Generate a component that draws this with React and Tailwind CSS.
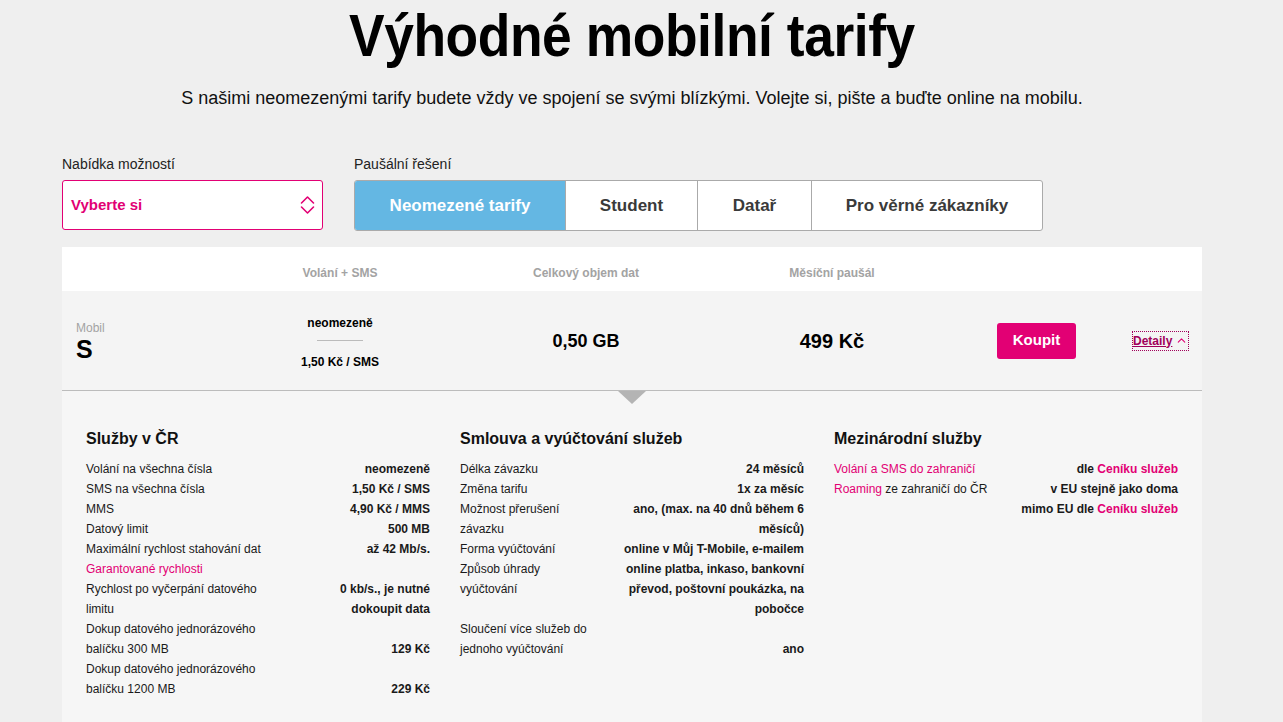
import { ChevronUp } from 'lucide-react';

const TABS = [
  { label: 'Neomezené tarify', w: 'w-[210px]', active: true },
  { label: 'Student', w: 'w-[132px]' },
  { label: 'Datař', w: 'w-[114px]' },
  { label: 'Pro věrné zákazníky', w: 'w-[231px]' },
];

const PINK = 'text-[#e20074]';

const SLUZBY = [
  ['Volání na všechna čísla', 'neomezeně'],
  ['SMS na všechna čísla', '1,50 Kč / SMS'],
  ['MMS', '4,90 Kč / MMS'],
  ['Datový limit', '500 MB'],
  ['Maximální rychlost stahování dat', 'až 42 Mb/s.'],
  [<span className={PINK}>Garantované rychlosti</span>, ''],
  ['Rychlost po vyčerpání datového limitu', '0 kb/s., je nutné dokoupit data'],
  ['Dokup datového jednorázového balíčku 300 MB', '129 Kč'],
  ['Dokup datového jednorázového balíčku 1200 MB', '229 Kč'],
];

const SMLOUVA = [
  ['Délka závazku', '24 měsíců'],
  ['Změna tarifu', '1x za měsíc'],
  ['Možnost přerušení závazku', 'ano, (max. na 40 dnů během 6 měsíců)'],
  ['Forma vyúčtování', 'online v Můj T-Mobile, e-mailem'],
  ['Způsob úhrady vyúčtování', 'online platba, inkaso, bankovní převod, poštovní poukázka, na pobočce'],
  ['Sloučení více služeb do jednoho vyúčtování', 'ano'],
];

const MEZI = [
  [<span className={PINK}>Volání a SMS do zahraničí</span>, <>dle <span className={PINK}>Ceníku služeb</span></>],
  [<><span className={PINK}>Roaming</span> ze zahraničí do ČR</>, 'v EU stejně jako doma'],
  ['', <>mimo EU dle <span className={PINK}>Ceníku služeb</span></>],
];

// key top, value bottom - jako v originálu
function DetailTable({ title, rows, keyW }) {
  return (
    <div className="w-[344px]">
      <h3 className="text-[16px] leading-[20px] font-bold text-[#111]">{title}</h3>
      <table className="mt-[10px] w-full border-collapse text-[12px] leading-[20px] text-[#1a1a1a]">
        <tbody>
          {rows.map((r, i) => (
            <tr key={i}>
              <td className={`${keyW} pr-2 text-left align-top`}>{r[0]}</td>
              <td className="text-right align-bottom font-bold">{r[1]}</td>
            </tr>
          ))}
        </tbody>
      </table>
    </div>
  );
}

function UpDown() {
  return (
    <svg width="15" height="20" viewBox="0 0 15 20" fill="none" stroke="#e20074" strokeWidth="1.6" strokeLinecap="round" strokeLinejoin="round">
      <path d="M1.5 8 L7.5 2 L13.5 8" />
      <path d="M1.5 12 L7.5 18 L13.5 12" />
    </svg>
  );
}

export default function App() {
  return (
    <div className="min-h-screen bg-[#efefef] font-['Liberation_Sans',Arial,sans-serif] text-black">
      <div className="ml-[62px] w-[1140px]">
        <div className="pt-[4px] text-center">
          <h1 className="inline-block origin-center scale-x-[0.89] text-[60px] leading-[64px] font-bold tracking-[-0.5px]">
            Výhodné mobilní tarify
          </h1>
        </div>
        <p className="mt-[19px] text-center text-[18px] leading-[22px] text-[#111]">
          S našimi neomezenými tarify budete vždy ve spojení se svými blízkými. Volejte si, pište a buďte online na mobilu.
        </p>

        <div className="mt-[46px] flex gap-[31px]">
          <div className="w-[261px]">
            <div className="text-[14px] leading-[18px] text-[#222]">Nabídka možností</div>
            <div className="mt-[7px] flex h-[50px] items-center justify-between rounded-[3px] border border-[#e20074] bg-white pl-[8px] pr-[7px]">
              <span className="text-[15px] font-bold text-[#e20074]">Vyberte si</span>
              <UpDown />
            </div>
          </div>
          <div>
            <div className="text-[14px] leading-[18px] text-[#222]">Paušální řešení</div>
            <div className="mt-[7px] flex h-[51px] overflow-hidden rounded-[3px] border border-[#aaa] bg-white">
              {TABS.map((t, i) => (
                <div
                  key={t.label}
                  className={`${t.w} flex items-center justify-center text-[17px] font-bold ${
                    t.active ? 'bg-[#64b7e3] text-white' : 'text-[#3a3a3a]'
                  } ${i > 0 ? 'border-l border-[#aaa]' : ''}`}
                >
                  {t.label}
                </div>
              ))}
            </div>
          </div>
        </div>

        <div className="mt-[16px] bg-[#f6f6f6]">
          <div className="flex h-[44px] bg-white pt-[18px] text-[12px] leading-[16px] font-bold text-[#a3a3a3]">
            <div className="w-[155px]" />
            <div className="w-[246px] text-center">Volání + SMS</div>
            <div className="w-[246px] text-center">Celkový objem dat</div>
            <div className="w-[246px] text-center">Měsíční paušál</div>
          </div>

          <div className="relative flex h-[100px] items-center border-b border-[#bcbcbc] bg-[#f4f4f4]">
            <div className="w-[155px] pl-[14px] pt-[2px]">
              <div className="text-[12px] leading-[14px] text-[#a3a3a3]">Mobil</div>
              <div className="text-[25px] leading-[28px] font-bold">S</div>
            </div>
            <div className="flex w-[246px] flex-col items-center pt-[3px] text-[12px] font-bold">
              <div className="leading-[16px]">neomezeně</div>
              <div className="mt-[9px] mb-[13px] h-px w-[46px] bg-[#bbb]" />
              <div className="leading-[16px]">1,50 Kč / SMS</div>
            </div>
            <div className="w-[246px] pt-[2px] text-center text-[18px] font-bold">0,50 GB</div>
            <div className="w-[246px] text-center text-[20px] font-bold">499 Kč</div>
            <div className="flex flex-1 items-center">
              <button className="ml-[42px] h-[36px] w-[79px] rounded-[3px] bg-[#e20074] text-[15px] font-bold text-white">
                Koupit
              </button>
              <a className="ml-[57px] flex items-center gap-[3px] text-[12px] font-bold text-[#a0005a] underline outline-1 outline-dotted outline-[#a0005a]">
                Detaily
                <ChevronUp size={13} strokeWidth={2} className="text-[#e20074]" />
              </a>
            </div>
            <div className="absolute left-[556px] top-[100px] h-0 w-0 border-x-[14px] border-t-[13px] border-x-transparent border-t-[#b4b4b4]" />
          </div>

          <div className="flex gap-[30px] px-[24px] pt-[38px] pb-[30px]">
            <DetailTable title="Služby v ČR" rows={SLUZBY} keyW="w-[205px]" />
            <DetailTable title="Smlouva a vyúčtování služeb" rows={SMLOUVA} keyW="w-[140px]" />
            <DetailTable title="Mezinárodní služby" rows={MEZI} keyW="w-[172px]" />
          </div>
        </div>
      </div>
    </div>
  );
}
